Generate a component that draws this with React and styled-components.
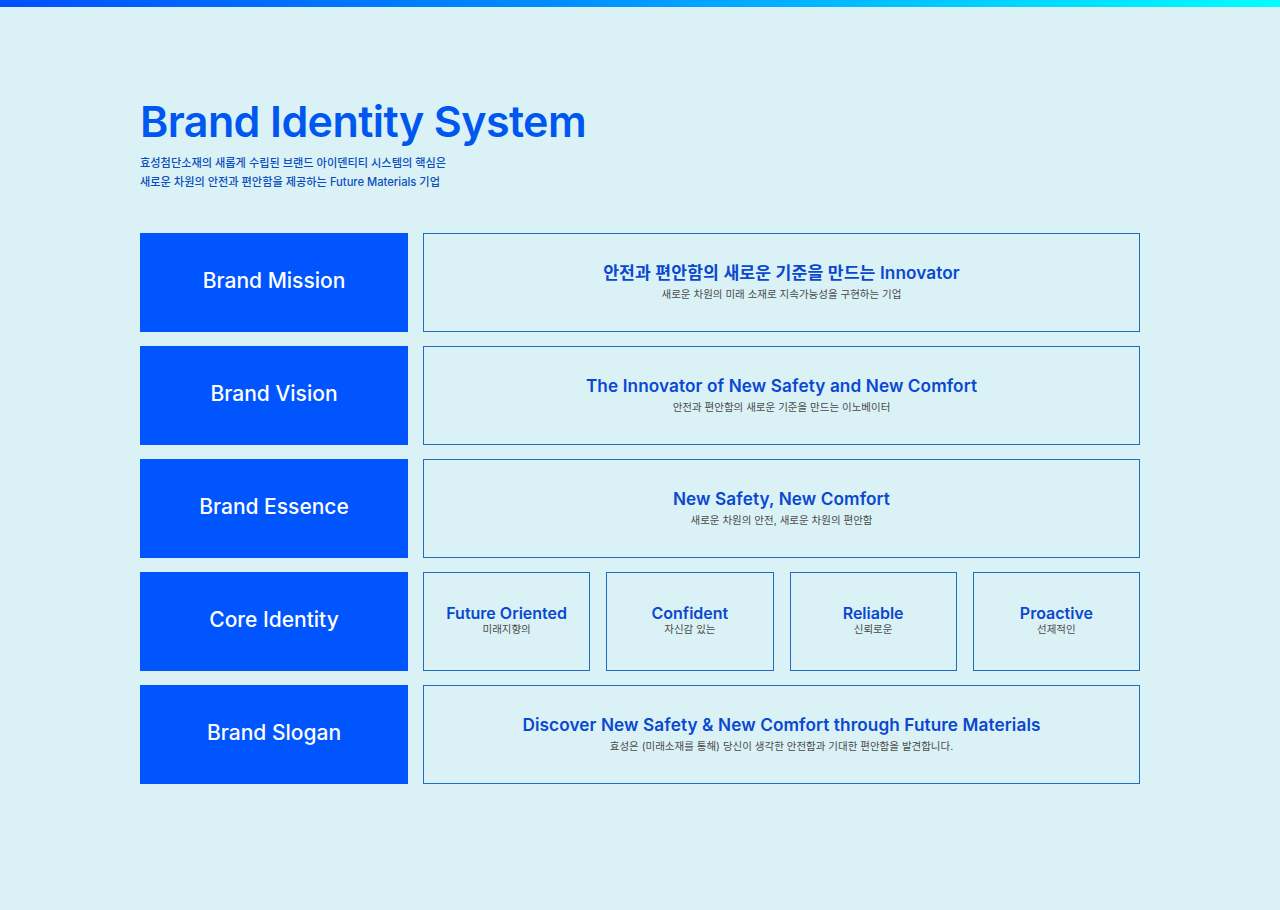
import styled, { createGlobalStyle } from 'styled-components';

const GlobalStyle = createGlobalStyle`
  html, body {
    margin: 0;
    padding: 0;
    background: #daf2f5;
  }
  body {
    font-family: "Inter", "Noto Sans CJK KR", sans-serif;
  }
`;

const TopBar = styled.div`
  height: 7px;
  background: linear-gradient(90deg, #0050ff 0%, #0090ff 45%, #00ffff 100%);
`;

const Page = styled.main`
  min-height: 903px;
  padding: 86px 140px 0;
  box-sizing: border-box;
`;

const Title = styled.h1`
  margin: 0;
  font-size: 43px;
  font-weight: 600;
  letter-spacing: -0.6px;
  line-height: 56px;
  color: #0057f0;
`;

const Intro = styled.p`
  margin: 5px 0 0;
  font-size: 11.2px;
  line-height: 19px;
  font-weight: 500;
  color: #0a4ec2;
`;

const Rows = styled.div`
  display: flex;
  flex-direction: column;
  gap: 14px;
  margin-top: 41px;
  width: 1000px;
`;

const Row = styled.section`
  display: grid;
  grid-template-columns: 268px 1fr;
  gap: 15px;
  height: 99px;
`;

const Label = styled.div`
  display: flex;
  align-items: center;
  justify-content: center;
  background: #0055ff;
  color: #ffffff;
  font-size: 21px;
  font-weight: 500;
  padding-bottom: 5px;
  box-sizing: border-box;
`;

const Card = styled.div`
  display: flex;
  flex-direction: column;
  align-items: center;
  justify-content: center;
  border: 1px solid #1f6cc0;
  box-sizing: border-box;
  padding-bottom: ${(p) => (p.$trait ? '4px' : '0')};
`;

const Traits = styled.div`
  display: grid;
  grid-template-columns: repeat(4, 1fr);
  gap: 16px;
`;

const Heading = styled.div`
  font-size: ${(p) => (p.$small ? '16px' : '17.2px')};
  font-weight: 600;
  letter-spacing: ${(p) => (p.$small ? '0' : '0.1px')};
  line-height: 20px;
  color: #0a48d0;
`;

const Sub = styled.div`
  margin-top: ${(p) => (p.$tight ? '0' : '5px')};
  font-size: 10.5px;
  line-height: 14px;
  color: #4a4a4a;
`;

const rows = [
  {
    label: 'Brand Mission',
    title: '안전과 편안함의 새로운 기준을 만드는 Innovator',
    sub: '새로운 차원의 미래 소재로 지속가능성을 구현하는 기업',
  },
  {
    label: 'Brand Vision',
    title: 'The Innovator of New Safety and New Comfort',
    sub: '안전과 편안함의 새로운 기준을 만드는 이노베이터',
  },
  {
    label: 'Brand Essence',
    title: 'New Safety, New Comfort',
    sub: '새로운 차원의 안전, 새로운 차원의 편안함',
  },
  {
    label: 'Core Identity',
    traits: [
      ['Future Oriented', '미래지향의'],
      ['Confident', '자신감 있는'],
      ['Reliable', '신뢰로운'],
      ['Proactive', '선제적인'],
    ],
  },
  {
    label: 'Brand Slogan',
    title: 'Discover New Safety & New Comfort through Future Materials',
    sub: '효성은 (미래소재를 통해) 당신이 생각한 안전함과 기대한 편안함을 발견합니다.',
  },
];

export default function App() {
  return (
    <>
      <GlobalStyle />
      <TopBar />
      <Page>
        <Title>Brand Identity System</Title>
        <Intro>
          효성첨단소재의 새롭게 수립된 브랜드 아이덴티티 시스템의 핵심은
          <br />
          새로운 차원의 안전과 편안함을 제공하는 Future Materials 기업
        </Intro>
        <Rows>
          {rows.map((r) => (
            <Row key={r.label}>
              <Label>{r.label}</Label>
              {r.traits ? (
                <Traits>
                  {r.traits.map(([t, s]) => (
                    <Card key={t} $trait>
                      <Heading $small>{t}</Heading>
                      <Sub $tight>{s}</Sub>
                    </Card>
                  ))}
                </Traits>
              ) : (
                <Card>
                  <Heading>{r.title}</Heading>
                  <Sub>{r.sub}</Sub>
                </Card>
              )}
            </Row>
          ))}
        </Rows>
      </Page>
    </>
  );
}
